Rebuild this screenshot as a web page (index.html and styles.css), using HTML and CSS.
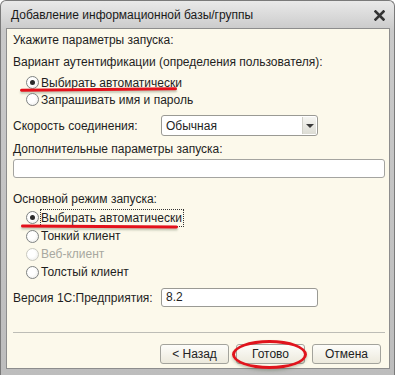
FILE: index.html
```html
<!DOCTYPE html>
<html lang="ru">
<head>
  <meta charset="UTF-8">
  <title>Добавление информационной базы/группы</title>
  <link rel="stylesheet" href="styles.css">
</head>
<body>
  <div class="window">
    <div class="titlebar">
      <span class="title">Добавление информационной базы/группы</span>
      <svg class="close" width="11" height="11" viewBox="0 0 11 11">
        <path d="M1.5 1.5 L9.5 9.5 M9.5 1.5 L1.5 9.5" stroke="#333" stroke-width="2.6" stroke-linecap="square"/>
      </svg>
    </div>

    <div class="content">
      <div class="row first">Укажите параметры запуска:</div>
      <div class="row label-gap">Вариант аутентификации (определения пользователя):</div>

      <div class="radio-row r17 mark-row">
        <span class="radio checked"></span><span>Выбирать автоматически</span>
        <span class="underline u1"></span>
      </div>
      <div class="radio-row r17">
        <span class="radio"></span><span>Запрашивать имя и пароль</span>
      </div>

      <div class="field-row speed">
        <span class="field-label">Скорость соединения:</span>
        <div class="select">
          <span class="select-text">Обычная</span>
          <span class="select-btn"><span class="arrow"></span></span>
        </div>
      </div>

      <div class="row extra-label">Дополнительные параметры запуска:</div>
      <div class="wide-input"></div>

      <div class="row mode-label">Основной режим запуска:</div>
      <div class="radio-row r19 mark-row">
        <span class="radio checked"></span><span class="focus">Выбирать автоматически</span>
        <span class="underline u2"></span>
      </div>
      <div class="radio-row r18">
        <span class="radio"></span><span>Тонкий клиент</span>
      </div>
      <div class="radio-row r18 disabled">
        <span class="radio"></span><span>Веб-клиент</span>
      </div>
      <div class="radio-row r18">
        <span class="radio"></span><span>Толстый клиент</span>
      </div>

      <div class="field-row version">
        <span class="field-label">Версия 1С:Предприятия:</span>
        <div class="input">8.2</div>
      </div>

      <div class="separator"></div>

      <div class="buttons">
        <button class="btn">&lt; Назад</button>
        <button class="btn ringed">Готово<span class="ring"></span></button>
        <button class="btn">Отмена</button>
      </div>
    </div>
  </div>
</body>
</html>
```

FILE: styles.css
```css
* { box-sizing: border-box; }
body {
  margin: 0;
  background: #fff;
  font-family: "Liberation Sans", Arial, sans-serif;
  font-size: 12px;
  color: #1e1e1e;
}
.window {
  width: 395px;
  height: 375px;
  display: flex;
  flex-direction: column;
  background: linear-gradient(#e9e9e9, #c9c9c9 8%, #bdbdbd 100%);
  border: 1px solid #7a7a7a;
  border-bottom: none;
  border-radius: 6px 6px 0 0;
  padding: 0 4px 0 5px;
}
.titlebar {
  height: 27px;
  display: flex;
  align-items: center;
  justify-content: space-between;
  padding: 1px 5px 0 5px;
  font-size: 12px;
  color: #1a1a1a;
}

.content {
  height: 341px;
  background: #fcf9eb;
  border: 1px solid #8d8d8d;
  padding: 2px 6px 0 6px;
  display: flex;
  flex-direction: column;
}
.row {
  height: 18px;
  line-height: 18px;
  white-space: nowrap;
}
.label-gap { margin-top: 4px; }

.radio-row {
  position: relative;
  display: flex;
  align-items: center;
  padding-left: 13px;
  white-space: nowrap;
}
.r17 { height: 17px; }
.r18 { height: 18px; }
.r19 { height: 19px; }
.label-gap + .radio-row { margin-top: 3px; }
.radio {
  width: 13px;
  height: 13px;
  margin-right: 2px;
  border-radius: 50%;
  border: 1px solid #7f8383;
  background: radial-gradient(circle at 40% 40%, #fff 40%, #e6e6e2 100%);
  display: flex;
  align-items: center;
  justify-content: center;
  flex-shrink: 0;
}
.radio.checked::after {
  content: "";
  width: 5px;
  height: 5px;
  border-radius: 50%;
  background: #2b2b2b;
}
.disabled { color: #a8a8a0; }
.disabled .radio { border-color: #c9c9c0; }
.focus {
  outline: 1px dotted #333;
  outline-offset: 0;
  padding-right: 1px;
  line-height: 16px;
}
.underline {
  position: absolute;
  height: 3px;
  background: #e4111b;
  border-radius: 2px;
  box-shadow: 0 2px 2px rgba(90, 110, 80, 0.35);
}
.u1 { left: 7px; top: 14px; width: 157px; transform: rotate(-0.5deg); }
.u2 { left: 8px; top: 17px; width: 157px; transform: rotate(0.3deg); }

.field-row {
  display: flex;
  align-items: center;
}
.field-label { width: 148px; }
.speed { margin-top: 7px; height: 21px; }
.select {
  width: 157px;
  height: 21px;
  display: flex;
  align-items: center;
  border: 1px solid #9a9a94;
  border-radius: 3px;
  background: #fff;
}
.select-text { flex: 1; padding-left: 4px; }
.select-btn {
  width: 14px;
  height: 17px;
  margin-right: 1px;
  border-left: 1px solid #d0d0c8;
  background: linear-gradient(#f6f6f2, #dcdcd4);
  display: flex;
  align-items: center;
  justify-content: center;
}
.arrow {
  width: 0;
  height: 0;
  border-left: 4px solid transparent;
  border-right: 4px solid transparent;
  border-top: 4px solid #3a3a3a;
}
.extra-label { margin-top: 4px; }
.wide-input {
  width: 372px;
  height: 19px;
  margin-top: 1px;
  border: 1px solid #a4a4a0;
  border-radius: 3px;
  background: #fff;
}
.mode-label { margin-top: 12px; }

.version { margin-top: 7px; height: 19px; }
.input {
  width: 157px;
  height: 19px;
  line-height: 17px;
  padding-left: 4px;
  border: 1px solid #9a9a94;
  border-radius: 3px;
  background: #fff;
}
.separator {
  margin-top: 25px;
  height: 1px;
  width: 372px;
  background: #bdbdb6;
}
.buttons {
  margin-top: 11px;
  display: flex;
  justify-content: flex-end;
  gap: 7px;
  padding-right: 2px;
}
.btn {
  position: relative;
  width: 69px;
  height: 20px;
  font-family: "Liberation Sans", Arial, sans-serif;
  font-size: 12px;
  color: #222;
  border: 1px solid #a3a39c;
  border-radius: 3px;
  background: linear-gradient(#fdfdfa, #ece9dc);
  padding: 0;
}
.ring {
  position: absolute;
  left: -5px;
  top: -5px;
  width: 75px;
  height: 29px;
  border: 3px solid #e0141c;
  border-radius: 50%;
  box-shadow: 0 2px 3px rgba(90, 110, 80, 0.35);
}
```
